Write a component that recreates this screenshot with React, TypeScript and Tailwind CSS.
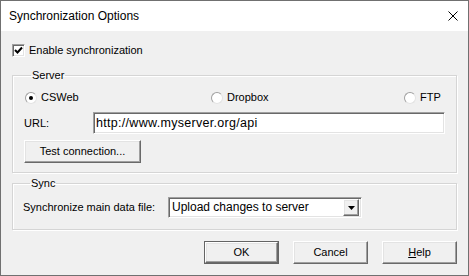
import React from 'react';

const font = { fontFamily: '"Liberation Sans", Arial, sans-serif' };

const raised =
  'bg-[#f0f0f0] border border-t-white border-l-white border-b-[#696969] border-r-[#696969] shadow-[inset_-1px_-1px_0_#a0a0a0,inset_1px_1px_0_#e3e3e3]';
const sunken =
  'bg-white border border-t-[#a0a0a0] border-l-[#a0a0a0] border-b-white border-r-white shadow-[inset_1px_1px_0_#696969,inset_-1px_-1px_0_#e3e3e3]';
const groupBox =
  'border border-[#d5d5d5] shadow-[inset_1px_1px_0_#fff,1px_1px_0_#fff]';

function Radio({ checked, label }: { checked?: boolean; label: string }) {
  return (
    <label className="flex items-center gap-[4px] h-[13px]">
      <span className="w-[12px] h-[12px] rounded-full bg-white border border-t-[#a0a0a0] border-l-[#a0a0a0] border-b-[#e3e3e3] border-r-[#e3e3e3] flex items-center justify-center">
        {checked && <span className="w-[4px] h-[4px] rounded-full bg-black" />}
      </span>
      <span>{label}</span>
    </label>
  );
}

function Button({
  children,
  isDefault,
  wide,
}: {
  children: React.ReactNode;
  isDefault?: boolean;
  wide?: boolean;
}) {
  const size = wide ? 'w-[117px] h-[23px]' : isDefault ? 'w-[73px] h-[21px]' : 'w-[75px] h-[23px]';
  return (
    <div className={isDefault ? 'border border-[#646464]' : 'p-0'}>
      <button className={`${raised} ${size} flex items-center justify-center text-[11px] text-black whitespace-nowrap`}>
        {children}
      </button>
    </div>
  );
}

export default function App() {
  return (
    <div
      className="w-[469px] h-[276px] border border-[#707070] flex flex-col text-[11px] text-black leading-[13px]"
      style={font}
    >
      <div className="h-[30px] bg-white flex items-center pl-[8px] pr-[10px] shrink-0">
        <span className="text-[12px]">Synchronization Options</span>
        <svg className="ml-auto" width="10" height="10" viewBox="0 0 10 10">
          <path d="M0.5 0.5 L9.5 9.5 M9.5 0.5 L0.5 9.5" stroke="#000" strokeWidth="1" fill="none" />
        </svg>
      </div>

      <div className="flex-1 bg-[#f0f0f0] px-[11px] pt-[13px] flex flex-col">
        <label className="flex items-center gap-[4px] h-[13px]">
          <span className={`${sunken} w-[13px] h-[13px] flex items-center justify-center`}>
            <svg width="9" height="9" viewBox="0 0 9 9">
              <path d="M1 4 L3.5 6.5 L8 1.5" stroke="#000" strokeWidth="2" fill="none" />
            </svg>
          </span>
          <span>Enable synchronization</span>
        </label>

        <fieldset className={`${groupBox} mt-[12px] pl-[11px] pr-[11px] pt-[9px] pb-[9px]`}>
          <legend className="ml-[7px] px-[1px]">Server</legend>
          <div className="flex items-center pl-[1px]">
            <div className="w-[186px]">
              <Radio checked label="CSWeb" />
            </div>
            <div className="w-[193px]">
              <Radio label="Dropbox" />
            </div>
            <Radio label="FTP" />
          </div>
          <div className="flex items-center mt-[8px]">
            <span className="w-[69px]">URL:</span>
            <div className={`${sunken} w-[352px] h-[22px] flex items-center px-[2px] text-[12.5px] tracking-[0.3px]`}>
              http://www.myserver.org/api
            </div>
          </div>
          <div className="mt-[6px]">
            <Button wide>Test connection...</Button>
          </div>
        </fieldset>

        <fieldset className={`${groupBox} mt-[4px] pl-[10px] pt-[7px] pb-[11px]`}>
          <legend className="ml-[7px] px-[1px]">Sync</legend>
          <div className="flex items-center">
            <span className="w-[145px]">Synchronize main data file:</span>
            <div className={`${sunken} w-[194px] h-[21px] flex items-center pl-[3px] pr-[2px] text-[12px]`}>
              <span>Upload changes to server</span>
              <span className={`${raised} ml-auto w-[16px] h-[17px] flex items-center justify-center`}>
                <svg width="7" height="4" viewBox="0 0 7 4">
                  <path d="M0 0 H7 L3.5 4 Z" fill="#000" />
                </svg>
              </span>
            </div>
          </div>
        </fieldset>

        <div className="flex justify-end gap-[14px] mt-[11px]">
          <Button isDefault>OK</Button>
          <Button>Cancel</Button>
          <Button>
            <span>
              <span className="underline">H</span>elp
            </span>
          </Button>
        </div>
      </div>
    </div>
  );
}
